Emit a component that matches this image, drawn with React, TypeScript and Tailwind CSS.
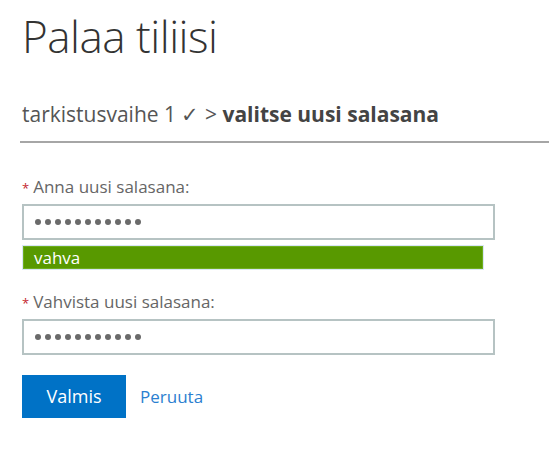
import React from "react";

function PasswordField({ label, dots }: { label: string; dots: number }) {
  return (
    <div>
      <label className="flex items-baseline text-[17px] leading-[20px] text-[#666]">
        <span className="mr-[4px] text-[13px] text-[#c4262e]">*</span>
        {label}
      </label>
      <div className="mt-[6px] flex h-[36px] w-[473px] items-center border-2 border-[#b6c3c3] bg-white pl-[11px]">
        <div className="flex gap-[4px]">
          {Array.from({ length: dots }).map((_, i) => (
            <span key={i} className="h-[6px] w-[6px] rounded-full bg-[#6a6a6a]" />
          ))}
        </div>
      </div>
    </div>
  );
}

export default function App() {
  return (
    <div className="h-[454px] w-[549px] overflow-hidden bg-white font-['Open_Sans',sans-serif]">
      <div className="pl-[22px] pt-[8px]">
        <h1 className="text-[44px] font-light leading-[56px] tracking-[-0.5px] text-[#333]">
          Palaa tiliisi
        </h1>
        <p className="mt-[37px] text-[21px] leading-[26px] text-[#555]">
          tarkistusvaihe 1 ✓ &gt;{" "}
          <span className="font-bold text-[#444]">valitse uusi salasana</span>
        </p>
      </div>
      <div className="ml-[20px] mt-[14px] h-[2px] bg-[#a6a6a6]" />

      <div className="pl-[22px] pt-[34px]">
        <PasswordField label="Anna uusi salasana:" dots={11} />
        <div className="mt-[5px] w-[462px] border border-[#d9e6f5]">
          <div className="border border-[#6fae1e] bg-[#589900] pl-[10px] text-[17px] leading-[21px] text-white">
            vahva
          </div>
        </div>

        <div className="mt-[22px]">
          <PasswordField label="Vahvista uusi salasana:" dots={11} />
        </div>

        <div className="mt-[20px] flex items-center gap-[14px]">
          <button className="h-[43px] w-[104px] bg-[#0072c6] text-[18px] text-white">
            Valmis
          </button>
          <a className="text-[17px] text-[#2b7fd0]">Peruuta</a>
        </div>
      </div>
    </div>
  );
}
